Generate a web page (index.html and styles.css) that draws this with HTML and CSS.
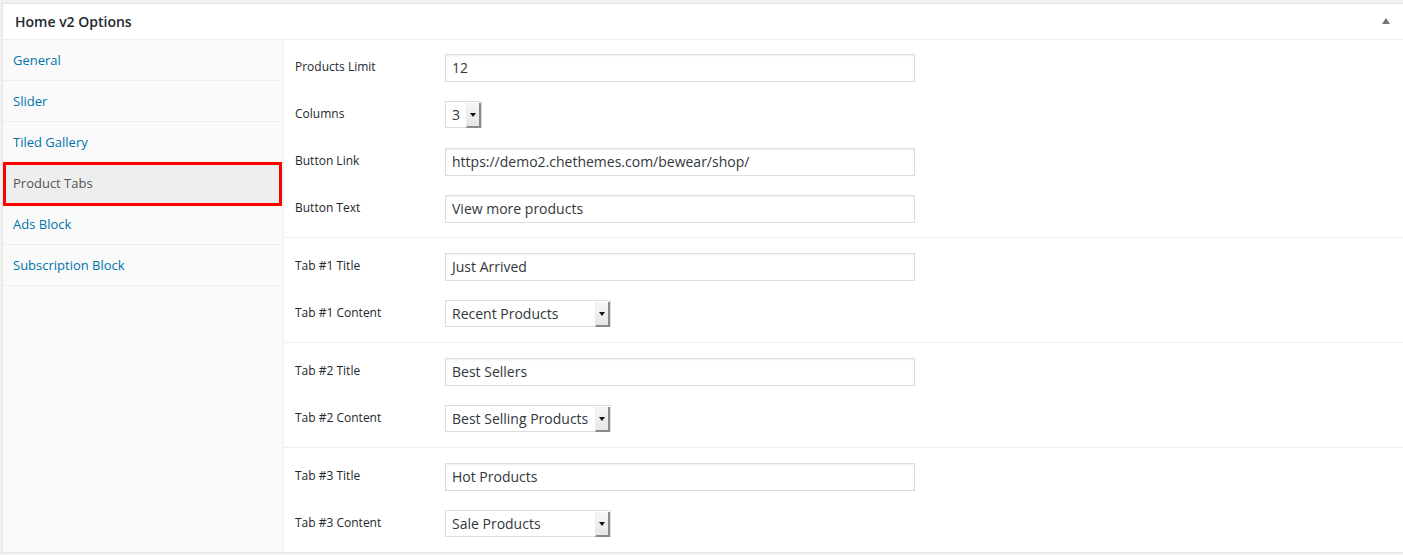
FILE: index.html
```html
<!DOCTYPE html>
<html>
<head>
<meta charset="utf-8">
<link rel="stylesheet" href="styles.css">
</head>
<body>
<div class="postbox">
  <div class="hndle">
    <h2 class="title">Home v2 Options</h2>
    <span class="toggle"></span>
  </div>
  <div class="inside">
    <ul class="tabs">
      <li class="tab"><a>General</a></li>
      <li class="tab"><a>Slider</a></li>
      <li class="tab"><a>Tiled Gallery</a></li>
      <li class="tab active"><a>Product Tabs</a></li>
      <li class="tab"><a>Ads Block</a></li>
      <li class="tab"><a>Subscription Block</a></li>
    </ul>
    <div class="panel">
      <div class="section first">
        <div class="row"><label class="lbl">Products Limit</label><div class="input">12</div></div>
        <div class="row"><label class="lbl">Columns</label><div class="select small"><span class="val">3</span><span class="arrow"></span></div></div>
        <div class="row"><label class="lbl">Button Link</label><div class="input">https://demo2.chethemes.com/bewear/shop/</div></div>
        <div class="row"><label class="lbl">Button Text</label><div class="input">View more products</div></div>
      </div>
      <div class="section">
        <div class="row"><label class="lbl">Tab #1 Title</label><div class="input">Just Arrived</div></div>
        <div class="row"><label class="lbl">Tab #1 Content</label><div class="select wide"><span class="val">Recent Products</span><span class="arrow"></span></div></div>
      </div>
      <div class="section">
        <div class="row"><label class="lbl">Tab #2 Title</label><div class="input">Best Sellers</div></div>
        <div class="row"><label class="lbl">Tab #2 Content</label><div class="select wide"><span class="val">Best Selling Products</span><span class="arrow"></span></div></div>
      </div>
      <div class="section last">
        <div class="row"><label class="lbl">Tab #3 Title</label><div class="input">Hot Products</div></div>
        <div class="row"><label class="lbl">Tab #3 Content</label><div class="select wide"><span class="val">Sale Products</span><span class="arrow"></span></div></div>
      </div>
    </div>
  </div>
</div>
</body>
</html>
```

FILE: styles.css
```css
html, body {
  margin: 0;
  padding: 0;
  background: #f1f1f1;
}
body {
  padding: 3px 0 0 2px;
  font-family: "Open Sans", "Liberation Sans", sans-serif;
  color: #23282d;
}
.postbox {
  background: #fff;
  border: 1px solid #e5e5e5;
  border-right: none;
  box-shadow: 0 1px 1px rgba(0,0,0,.04);
}
.hndle {
  height: 35px;
  border-bottom: 1px solid #eee;
  display: flex;
  align-items: center;
  justify-content: space-between;
  padding: 0 12px 0 12px;
}
.title {
  margin: 0;
  font-size: 14px;
  font-weight: 600;
  color: #23282d;
  line-height: 1;
}
.toggle {
  width: 0;
  height: 0;
  border-left: 4px solid transparent;
  border-right: 4px solid transparent;
  border-bottom: 6px solid #72777c;
  margin-right: 1px;
  margin-top: -1px;
}
.inside {
  display: flex;
}
.tabs {
  list-style: none;
  margin: 0;
  padding: 0;
  width: 280px;
  background: #fafafa;
  border-right: 1px solid #eee;
  flex: none;
}
.tab {
  height: 40px;
  border-bottom: 1px solid #eee;
  display: flex;
  align-items: center;
  padding-left: 10px;
  position: relative;
}
.tab a {
  font-size: 13px;
  color: #0073aa;
  margin-top: -1px;
}
.tab.active {
  background: #eee;
}
.tab.active a {
  color: #555;
}
.tab.active::after {
  content: "";
  position: absolute;
  left: 0;
  right: 1px;
  top: -1px;
  bottom: -3px;
  border: 3px solid #f00;
}
.panel {
  flex: 1;
}
.section {
  padding: 15px 0 14px 11px;
  border-bottom: 1px solid #eee;
  display: flex;
  flex-direction: column;
  gap: 19px;
}
.section.first {
  padding-top: 14px;
}
.section.last {
  border-bottom: none;
}
.row {
  display: flex;
  align-items: center;
  height: 28px;
}
.lbl {
  width: 150px;
  flex: none;
  font-size: 12px;
  color: #23282d;
  margin-top: -4px;
}
.input {
  width: 456px;
  height: 26px;
  border: 1px solid #ddd;
  box-shadow: inset 0 1px 2px rgba(0,0,0,.07);
  padding: 0 6px;
  font-size: 14px;
  line-height: 26px;
  color: #32373c;
  white-space: nowrap;
}
.select {
  height: 25px;
  border: 1px solid #ddd;
  display: flex;
  align-items: stretch;
  font-size: 14px;
  color: #32373c;
  margin-top: -1px;
}
.select .val {
  flex: 1;
  padding-left: 6px;
  line-height: 25px;
  white-space: nowrap;
}
.select.small { width: 35px; }
.select.wide { width: 164px; }
.arrow {
  width: 12px;
  flex: none;
  background: linear-gradient(#f7f7f7, #e6e6e6);
  border-right: 2px solid #8a8a8a;
  border-bottom: 2px solid #8a8a8a;
  border-left: 1px solid #ececec;
  margin: 1px 0 -1px 0;
  display: flex;
  align-items: center;
  justify-content: center;
  position: relative;
}
.arrow::before {
  content: "";
  width: 0;
  height: 0;
  border-left: 3px solid transparent;
  border-right: 3px solid transparent;
  border-top: 4px solid #111;
}
```
